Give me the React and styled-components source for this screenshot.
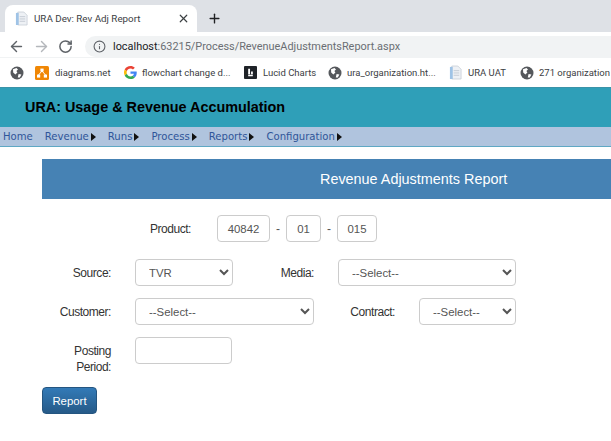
import React from "react";
import styled, { createGlobalStyle } from "styled-components";
import { ArrowLeft, ArrowRight, RotateCw, Info, Plus, X } from "lucide-react";

const GlobalStyle = createGlobalStyle`
  html, body {
    margin: 0;
    padding: 0;
    background: #fff;
    overflow: hidden;
  }
  * { box-sizing: border-box; }
`;

const Page = styled.div`
  width: 611px;
  height: 441px;
  overflow: hidden;
  font-family: "Liberation Sans", Arial, sans-serif;
`;

const TabStrip = styled.div`
  height: 32px;
  background: #dee1e6;
  display: flex;
  align-items: flex-end;
  padding-left: 5px;
`;
const Tab = styled.div`
  width: 192px;
  height: 27px;
  background: #fff;
  border-radius: 8px 8px 0 0;
  display: flex;
  align-items: center;
  padding: 0 7px 0 10px;
  font-family: Roboto, sans-serif;
  font-size: 9.8px;
  color: #3c4043;
`;
const TabTitle = styled.span`
  margin-left: 6px;
  flex: 1;
  white-space: nowrap;
`;
const NewTab = styled.div`
  width: 20px;
  height: 27px;
  margin-left: 7px;
  display: flex;
  align-items: center;
  justify-content: center;
  color: #202124;
`;

const Toolbar = styled.div`
  height: 26px;
  background: #fff;
  border-bottom: 1px solid #f1f3f4;
  display: flex;
  align-items: center;
  padding: 4px 0 0 8px;
`;
const NavIcon = styled.div`
  width: 25px;
  display: flex;
  color: ${(p) => (p.$off ? "#b4b7bb" : "#5f6368")};
`;
const Omnibox = styled.div`
  margin-left: 2px;
  height: 21px;
  flex: 1;
  background: #f1f3f4;
  border-radius: 11px 0 0 11px;
  display: flex;
  align-items: center;
  padding-left: 8px;
  font-family: Roboto, sans-serif;
  font-size: 10.9px;
  color: #6a6e73;
  white-space: nowrap;
  svg { color: #5f6368; margin-right: 7px; }
  b { font-weight: 400; color: #202124; }
`;

const Bookmarks = styled.div`
  height: 29px;
  background: #fff;
  display: flex;
  align-items: center;
  padding-left: 10px;
  font-family: Roboto, sans-serif;
  font-size: 9.5px;
  color: #3c4043;
  white-space: nowrap;
`;
const Mark = styled.div`
  display: flex;
  align-items: center;
  gap: ${(p) => p.$inner || 6}px;
  width: ${(p) => p.$w}px;
  flex-shrink: 0;
`;

const Header = styled.div`
  height: 40px;
  background: #2f9fb8;
  border-top: 1px solid #3a93a8;
  display: flex;
  align-items: center;
  padding: 0 0 2px 25px;
  font-size: 14.4px;
  font-weight: 700;
  color: #000;
`;

const Menu = styled.div`
  height: 20px;
  background: #b0c4de;
  border-bottom: 1px solid #5fa8c4;
  display: flex;
  align-items: center;
  padding-left: 3px;
  font-family: "DejaVu Sans", Verdana, sans-serif;
  font-size: 10.1px;
  color: #2f5599;
`;
const MenuItem = styled.div`
  display: flex;
  align-items: center;
  margin-right: 12px;
  &::after {
    content: "";
    display: ${(p) => (p.$arrow ? "block" : "none")};
    margin-left: 2px;
    border-left: 5px solid #111;
    border-top: 4px solid transparent;
    border-bottom: 4px solid transparent;
  }
`;

const Content = styled.div`
  padding: 12px 0 0 42px;
  font-size: 12px;
  color: #333;
`;
const TitleBar = styled.div`
  width: 569px;
  height: 40px;
  background: #4682b4;
  color: #fff;
  font-size: 14.4px;
  display: flex;
  align-items: center;
  padding-left: 278px;
  white-space: nowrap;
`;

const Row = styled.div`
  display: flex;
  align-items: center;
  height: 27px;
  margin-top: ${(p) => p.$top || 12}px;
`;
const Label = styled.label`
  width: ${(p) => p.$w}px;
  margin-right: ${(p) => p.$after || 24}px;
  text-align: right;
  font-size: 12px;
  line-height: 16px;
  letter-spacing: -0.45px;
  flex-shrink: 0;
`;
const PostingLabel = styled(Label)`
  margin-top: 17px;
`;
const fieldBase = `
  height: 27px;
  border: 1px solid #ccc;
  border-radius: 4px;
  background: #fff;
  color: #555;
  font-family: "Liberation Sans", Arial, sans-serif;
  font-size: 11.4px;
  outline: none;
`;
const TextInput = styled.input`
  ${fieldBase}
  width: ${(p) => p.$w}px;
  margin: 0;
  padding: 0;
  text-align: center;
`;
const Select = styled.select`
  ${fieldBase}
  width: ${(p) => p.$w}px;
  margin: 0;
  padding: 0 9px;
`;
const Dash = styled.span`
  width: 16px;
  text-align: center;
  color: #555;
`;

const ReportButton = styled.button`
  display: block;
  margin-top: 23px;
  width: 55px;
  height: 27px;
  border: 1px solid #245580;
  border-radius: 4px;
  background: linear-gradient(#337ab7, #265a88);
  color: #fff;
  font-family: "Liberation Sans", Arial, sans-serif;
  font-size: 11.4px;
  padding: 0;
`;

const Globe = () => (
  <svg width="14" height="14" viewBox="0 0 14 14">
    <circle cx="7" cy="7" r="6.5" fill="#55585c" />
    <path d="M3 3.2 L6.5 2 L8 3.4 L6.4 5 L7.4 6.4 L5.4 8.4 L3.2 6.4 Z M8.6 8 L11.4 8.4 L9.8 11.6 L7.8 11.6 Z" fill="#fff" />
  </svg>
);

const DocIcon = () => (
  <svg width="13" height="15" viewBox="0 0 14 16">
    <path d="M3 1 H9.5 L13 4.5 V15 H3 Z" fill="#eef1f5" stroke="#c3cad3" strokeWidth="0.8" />
    <path d="M1 2 H4 V15 H1 Z" fill="#9fc3e6" />
    <path d="M5 6 H11 M5 8.5 H11 M5 11 H11" stroke="#c3cad3" strokeWidth="1" />
  </svg>
);

const DrawioIcon = () => (
  <svg width="14" height="14" viewBox="0 0 14 14">
    <rect width="14" height="14" rx="1.5" fill="#f08705" />
    <path d="M7 5 L3.5 9 M7 5 L10.5 9" stroke="#fff" strokeWidth="1" />
    <rect x="5.4" y="2.6" width="3.2" height="3" fill="#fff" />
    <rect x="2" y="8.6" width="3.2" height="3" fill="#fff" />
    <rect x="8.8" y="8.6" width="3.2" height="3" fill="#fff" />
  </svg>
);

const GoogleIcon = () => (
  <svg width="13" height="13" viewBox="0 0 48 48">
    <path fill="#EA4335" d="M24 9.5c3.5 0 6.7 1.3 9.1 3.5l6.8-6.8C35.8 2.4 30.2 0 24 0 14.6 0 6.5 5.4 2.6 13.2l7.9 6.2C12.4 13.7 17.7 9.5 24 9.5z" />
    <path fill="#4285F4" d="M47 24.5c0-1.6-.1-3.1-.4-4.5H24v9h12.9c-.6 3-2.2 5.5-4.8 7.2l7.7 6C44.4 37.9 47 31.8 47 24.5z" />
    <path fill="#FBBC05" d="M10.5 28.6c-.5-1.4-.8-3-.8-4.6s.3-3.2.8-4.6l-7.9-6.2C.9 16.5 0 20.1 0 24s.9 7.5 2.6 10.8l7.9-6.2z" />
    <path fill="#34A853" d="M24 48c6.5 0 11.9-2.1 15.9-5.8l-7.7-6c-2.2 1.4-4.9 2.3-8.2 2.3-6.3 0-11.6-4.2-13.5-9.9l-7.9 6.2C6.5 42.6 14.6 48 24 48z" />
  </svg>
);

const LucidIcon = () => (
  <svg width="13" height="13" viewBox="0 0 14 14">
    <rect width="14" height="14" rx="1" fill="#1f2328" />
    <path d="M4.5 3 H6.5 V9 H4.5 Z M4.5 9.5 L9.5 9.5 V11 H4.5 Z M7.6 6 H9.5 V9 H7.6 Z" fill="#fff" />
  </svg>
);

export default function App() {
  return (
    <Page>
      <GlobalStyle />
      <TabStrip>
        <Tab>
          <DocIcon />
          <TabTitle>URA Dev: Rev Adj Report</TabTitle>
          <X size={13} color="#3c4043" strokeWidth={2.2} />
        </Tab>
        <NewTab>
          <Plus size={15} strokeWidth={2.2} />
        </NewTab>
      </TabStrip>
      <Toolbar>
        <NavIcon><ArrowLeft size={17} /></NavIcon>
        <NavIcon $off><ArrowRight size={17} /></NavIcon>
        <NavIcon><RotateCw size={15} strokeWidth={2.4} /></NavIcon>
        <Omnibox>
          <Info size={13} />
          <span><b>localhost</b>:63215/Process/RevenueAdjustmentsReport.aspx</span>
        </Omnibox>
      </Toolbar>
      <Bookmarks>
        <Mark $w={25}><Globe /></Mark>
        <Mark $w={89}><DrawioIcon />diagrams.net</Mark>
        <Mark $w={120} $inner={5}><GoogleIcon />flowchart change d...</Mark>
        <Mark $w={84}><LucidIcon />Lucid Charts</Mark>
        <Mark $w={121} $inner={5}><Globe />ura_organization.ht...</Mark>
        <Mark $w={71}><DocIcon />URA UAT</Mark>
        <Mark $w={91} $inner={5}><Globe />271 organization</Mark>
      </Bookmarks>
      <Header>URA: Usage &amp; Revenue Accumulation</Header>
      <Menu>
        <MenuItem>Home</MenuItem>
        <MenuItem $arrow>Revenue</MenuItem>
        <MenuItem $arrow>Runs</MenuItem>
        <MenuItem $arrow>Process</MenuItem>
        <MenuItem $arrow>Reports</MenuItem>
        <MenuItem $arrow>Configuration</MenuItem>
      </Menu>
      <Content>
        <TitleBar>Revenue Adjustments Report</TitleBar>
        <Row $top={16}>
          <Label $w={149} $after={26}>Product:</Label>
          <TextInput $w={53} defaultValue="40842" />
          <Dash>-</Dash>
          <TextInput $w={35} defaultValue="01" />
          <Dash>-</Dash>
          <TextInput $w={40} defaultValue="015" />
        </Row>
        <Row $top={17}>
          <Label $w={69}>Source:</Label>
          <Select $w={98}><option>TVR</option></Select>
          <Label $w={81}>Media:</Label>
          <Select $w={178}><option>--Select--</option></Select>
        </Row>
        <Row>
          <Label $w={69}>Customer:</Label>
          <Select $w={179}><option>--Select--</option></Select>
          <Label $w={81}>Contract:</Label>
          <Select $w={97}><option>--Select--</option></Select>
        </Row>
        <Row>
          <PostingLabel $w={69}>Posting Period:</PostingLabel>
          <TextInput $w={97} />
        </Row>
        <ReportButton>Report</ReportButton>
      </Content>
    </Page>
  );
}
